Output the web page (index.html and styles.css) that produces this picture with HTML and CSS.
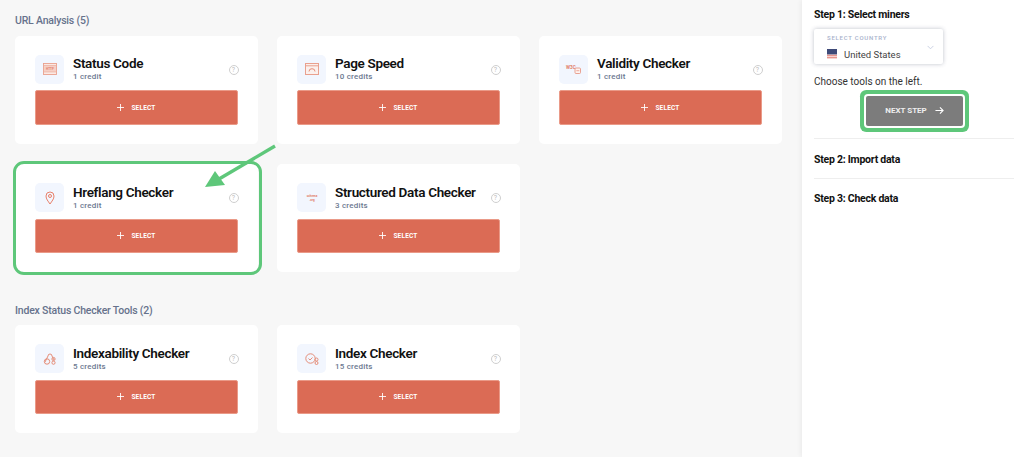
FILE: index.html
```html
<!DOCTYPE html>
<html lang="en">
<head>
<meta charset="utf-8">
<title>Miners</title>
<link rel="stylesheet" href="styles.css">
</head>
<body>
<div class="app">
  <main class="main">
    <h2 class="section-title first">URL Analysis (5)</h2>
    <div class="grid">
      <article class="card">
        <div class="card-head">
          <span class="icon-box"><svg class="ico" viewBox="0 0 14 12"><rect x=".5" y=".5" width="13" height="11" fill="#fbe9e4" stroke="#e9a08e" stroke-width=".9"/><path d="M1 2.8h12M1 8.8h12" stroke="#e9a08e" stroke-width=".9"/><rect x="1" y="3.2" width="12" height="5.2" fill="#f6cfc5"/><text x="7" y="7" text-anchor="middle" class="ico-text">HTTP</text></svg></span>
          <div class="card-text"><h3 class="card-title">Status Code</h3><p class="credits">1 credit</p></div>
          <span class="help">?</span>
        </div>
        <button class="select"><svg class="plus" viewBox="0 0 8 8"><path d="M4 0v8M0 4h8"/></svg>SELECT</button>
      </article>
      <article class="card">
        <div class="card-head">
          <span class="icon-box"><svg class="ico" viewBox="0 0 14 12"><rect x=".5" y=".5" width="13" height="11" fill="#fbf0ed" stroke="#e9a08e"/><path d="M1 2.8h12" stroke="#e9a08e"/><path d="M4 8.5a3 2.8 0 0 1 6 0" fill="none" stroke="#e58d78"/></svg></span>
          <div class="card-text"><h3 class="card-title">Page Speed</h3><p class="credits">10 credits</p></div>
          <span class="help">?</span>
        </div>
        <button class="select"><svg class="plus" viewBox="0 0 8 8"><path d="M4 0v8M0 4h8"/></svg>SELECT</button>
      </article>
      <article class="card">
        <div class="card-head">
          <span class="icon-box"><svg class="ico" viewBox="0 0 14 12"><text x="-1" y="6" class="ico-text-b">W3C</text><rect x="8" y="5" width="5.5" height="5.5" rx="1" fill="#fdf3f0" stroke="#e58d78" stroke-width=".8"/><path d="M9.3 7.7h3" stroke="#e58d78" stroke-width=".7"/></svg></span>
          <div class="card-text"><h3 class="card-title">Validity Checker</h3><p class="credits">1 credit</p></div>
          <span class="help">?</span>
        </div>
        <button class="select"><svg class="plus" viewBox="0 0 8 8"><path d="M4 0v8M0 4h8"/></svg>SELECT</button>
      </article>
      <article class="card highlighted">
        <div class="card-head">
          <span class="icon-box"><svg class="ico-pin" viewBox="0 0 10 14"><path d="M5 13C3 10 1 8 1 5a4 4 0 0 1 8 0c0 3-2 5-4 8z" fill="none" stroke="#e8806a"/><circle cx="5" cy="5" r="1.5" fill="none" stroke="#e8806a"/></svg></span>
          <div class="card-text"><h3 class="card-title">Hreflang Checker</h3><p class="credits">1 credit</p></div>
          <span class="help">?</span>
        </div>
        <button class="select"><svg class="plus" viewBox="0 0 8 8"><path d="M4 0v8M0 4h8"/></svg>SELECT</button>
      </article>
      <article class="card">
        <div class="card-head">
          <span class="icon-box"><svg class="ico" viewBox="0 0 14 12"><text x="7" y="4.5" text-anchor="middle" class="ico-text">schema</text><text x="7" y="9" text-anchor="middle" class="ico-text">.org</text></svg></span>
          <div class="card-text"><h3 class="card-title">Structured Data Checker</h3><p class="credits">3 credits</p></div>
          <span class="help">?</span>
        </div>
        <button class="select"><svg class="plus" viewBox="0 0 8 8"><path d="M4 0v8M0 4h8"/></svg>SELECT</button>
      </article>
    </div>
    <h2 class="section-title second">Index Status Checker Tools (2)</h2>
    <div class="grid">
      <article class="card">
        <div class="card-head">
          <span class="icon-box"><svg class="ico" viewBox="0 0 14 12"><path d="M2 9l3-6a2 2 0 0 1 4 0l2 4" fill="none" stroke="#e58d78"/><circle cx="4" cy="8.5" r="2.7" fill="none" stroke="#e58d78"/><circle cx="10.5" cy="6" r="1.6" fill="none" stroke="#e58d78"/><circle cx="10.5" cy="9.7" r="1.6" fill="none" stroke="#e58d78"/></svg></span>
          <div class="card-text"><h3 class="card-title">Indexability Checker</h3><p class="credits">5 credits</p></div>
          <span class="help">?</span>
        </div>
        <button class="select"><svg class="plus" viewBox="0 0 8 8"><path d="M4 0v8M0 4h8"/></svg>SELECT</button>
      </article>
      <article class="card">
        <div class="card-head">
          <span class="icon-box"><svg class="ico" viewBox="0 0 14 12"><circle cx="5.5" cy="5.5" r="4.7" fill="none" stroke="#e58d78"/><path d="M3.5 5.5l1.5 1.5 2.5-2.5" fill="none" stroke="#e58d78"/><circle cx="11.5" cy="6.5" r="1.5" fill="none" stroke="#e58d78"/><circle cx="11.5" cy="10" r="1.5" fill="none" stroke="#e58d78"/></svg></span>
          <div class="card-text"><h3 class="card-title">Index Checker</h3><p class="credits">15 credits</p></div>
          <span class="help">?</span>
        </div>
        <button class="select"><svg class="plus" viewBox="0 0 8 8"><path d="M4 0v8M0 4h8"/></svg>SELECT</button>
      </article>
    </div>
    <svg class="arrow" viewBox="0 0 80 50"><path d="M71 2L15 35" stroke="#5ec77a" stroke-width="3.4" fill="none"/><path d="M1 43L11 27 21 41z" fill="#5ec77a"/></svg>
  </main>
  <aside class="side">
    <h3 class="step-title">Step 1: Select miners</h3>
    <div class="country">
      <div class="country-info">
        <span class="country-label">SELECT COUNTRY</span>
        <span class="country-value"><svg class="flag" viewBox="0 0 10 10"><rect width="10" height="10" fill="#f6d5d0"/><path d="M0 6.5h10M0 8.5h10" stroke="#e58d88" stroke-width=".9"/><rect width="10" height="5.4" fill="#3e4a78"/></svg>United States</span>
      </div>
      <svg class="chevron" viewBox="0 0 8 5"><path d="M.7.7L4 4l3.3-3.3" fill="none" stroke="#c5cce0"/></svg>
    </div>
    <p class="hint">Choose tools on the left.</p>
    <div class="next-wrap">
      <button class="next">NEXT STEP<svg class="next-arrow" viewBox="0 0 10 10"><path d="M.5 5h8.5M5.5 1.5L9 5 5.5 8.5" fill="none" stroke="#fff" stroke-width="1.2"/></svg></button>
    </div>
    <hr class="rule rule-a">
    <h3 class="step-title">Step 2: Import data</h3>
    <hr class="rule rule-b">
    <h3 class="step-title">Step 3: Check data</h3>
  </aside>
</div>
</body>
</html>
```
FILE: styles.css
```css
* { box-sizing: border-box; }
html, body { margin: 0; height: 100%; overflow: hidden; }
body { font-family: Roboto, "Liberation Sans", sans-serif; background: #f7f7f7; color: #111; }
.app { display: flex; height: 457px; }
.main { position: relative; flex: 1; padding: 15px 0 0 15px; min-width: 0; }
.section-title { margin: 0; font-size: 10.5px; line-height: 12px; font-weight: 500; color: #66728c; letter-spacing: -.2px; }
.section-title.first { margin-bottom: 8.6px; }
.section-title.second { margin: 33px 0 8.1px; }
.grid { display: grid; grid-template-columns: repeat(3, 243px); column-gap: 19px; row-gap: 20.3px; }
.card { position: relative; height: 108px; background: #fff; border-radius: 5px; padding: 19.3px 20px 0; }
.highlighted::after { content: ""; position: absolute; inset: -3px -4px -3px -2px; border: 3.5px solid #5ec77a; border-radius: 11px; pointer-events: none; }
.card-head { display: flex; align-items: center; height: 29px; margin-bottom: 6.4px; position: relative; }
.icon-box { flex: none; width: 29px; height: 29px; border-radius: 5px; background: #f2f6fe; display: flex; align-items: center; justify-content: center; }
.ico { width: 14px; height: 12px; display: block; overflow: visible; }
.ico-pin { width: 10px; height: 14px; display: block; }
.ico-text { font: 700 3px Roboto, sans-serif; fill: #e2806a; }
.ico-text-b { font: 700 4.6px Roboto, sans-serif; fill: #e2806a; }
.card-text { margin-left: 9px; flex: 1; min-width: 0; margin-top: -1px; }
.card-title { margin: 0; font-size: 13.5px; line-height: 16px; font-weight: 600; color: #111; letter-spacing: -.33px; white-space: nowrap; }
.credits { margin: 1px 0 0; font-size: 8px; line-height: 10px; color: #6c7890; font-weight: 500; letter-spacing: .2px; }
.help { position: absolute; right: -.5px; top: 10px; width: 10px; height: 10px; border: 1px solid #cfcfcf; border-radius: 50%; color: #bdbdbd; font-size: 7px; line-height: 8px; text-align: center; }
.select { display: flex; align-items: center; justify-content: center; width: 203px; height: 34.6px; border: 1px solid #ea9a88; border-radius: 2px; background: #db6b55; color: #fff; font: 700 6.5px Roboto, sans-serif; letter-spacing: .2px; padding: 0; }
.plus { width: 7px; height: 7px; margin-right: 7px; fill: none; stroke: #fff; stroke-width: 1; }
.arrow { position: absolute; left: 204px; top: 144px; width: 80px; height: 50px; }
.side { flex: none; width: 222px; height: 457px; background: #fff; padding: 8px 10px 0 12px; box-shadow: -1px 0 5px rgba(0,0,0,.06); }
.step-title { margin: 0; font-size: 10.5px; line-height: 13px; font-weight: 700; color: #111; letter-spacing: -.25px; }
.country { width: 129px; height: 35px; margin-top: 8px; background: #fff; border-radius: 2px; box-shadow: 0 0 4px rgba(40,50,80,.3); display: flex; justify-content: space-between; padding: 5px 9px 0 13px; }
.country-info { display: flex; flex-direction: column; }
.country-label { font-size: 6px; line-height: 8px; font-weight: 500; letter-spacing: .75px; color: #a9b2cc; }
.country-value { display: flex; align-items: center; font-size: 9.5px; line-height: 13px; color: #444; margin-top: 5.5px; }
.flag { width: 10px; height: 10px; margin-right: 7px; }
.chevron { width: 7px; height: 5px; margin-top: 11px; }
.hint { margin: 11px 0 0; font-size: 10px; line-height: 13px; color: #333; }
.next-wrap { display: flex; padding-left: 52px; margin-top: 8px; }
.next { display: flex; align-items: center; justify-content: center; width: 97px; height: 29.5px; border: 0; box-shadow: 0 0 0 2px #fff, 0 0 0 6px #5ec77a; border-radius: 2px; background: #7c7c7c; color: #eee; font: 700 8px Roboto, sans-serif; padding: 0; }
.next-arrow { width: 9px; height: 9px; margin-left: 8px; }
.rule { border: 0; border-top: 1px solid #eee; margin: 0; }
.rule-a { margin-top: 12.5px; margin-bottom: 14px; }
.rule-b { margin-top: 11.5px; margin-bottom: 13px; }
```
